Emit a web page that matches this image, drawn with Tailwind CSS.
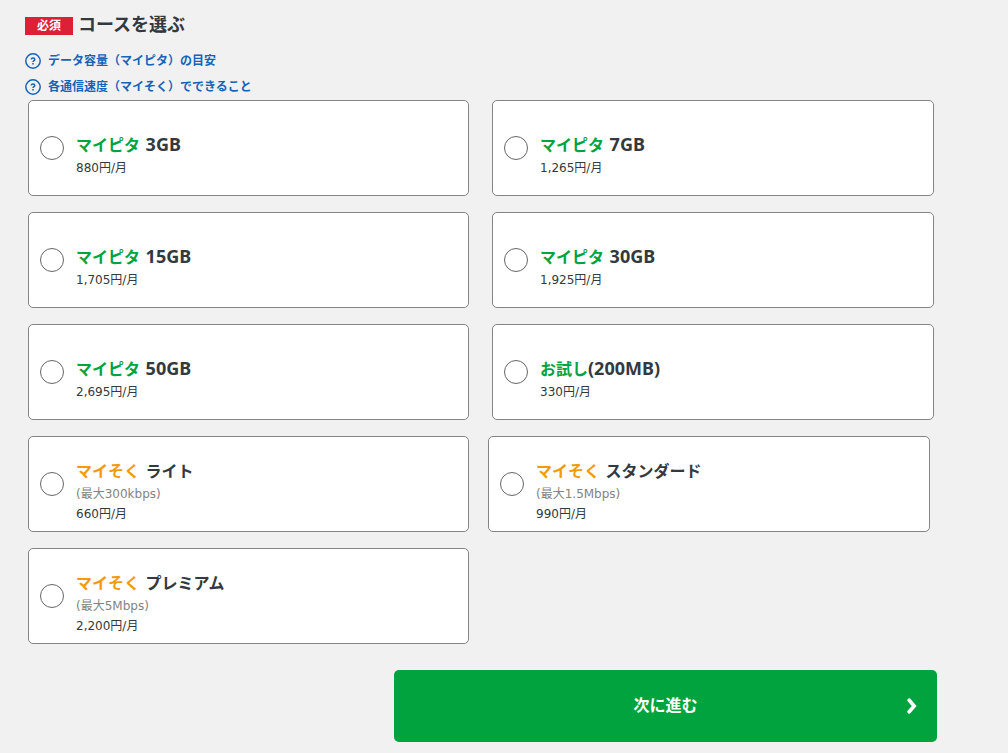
<!DOCTYPE html>
<html lang="ja">
<head>
<meta charset="utf-8">
<meta name="viewport" content="width=device-width, initial-scale=1">
<title>コースを選ぶ</title>
<script src="https://cdn.jsdelivr.net/npm/@tailwindcss/browser@4"></script>
</head>
<body class="min-h-screen bg-[#f1f1f1] font-['DejaVu_Sans','Noto_Sans_CJK_JP',sans-serif] text-[#333940]">
<main class="pt-[13px] pr-[71px] pb-[11px] pl-[25px]">
  <h2 class="flex h-6 items-center gap-[5px] text-lg leading-6 font-bold">
    <span class="mt-[2px] flex h-[18px] w-12 items-center justify-center bg-[#dc2035] text-xs leading-none text-white">必須</span>
    <span>コースを選ぶ</span>
  </h2>
  <ul class="mt-[11px] text-xs font-bold text-[#1464ba]">
    <li class="flex h-[26px] items-center">
      <a href="#capacity" class="flex items-center gap-[7px]">
        <svg class="size-4" viewBox="0 0 16 16" fill="none" stroke="currentColor" aria-hidden="true"><circle cx="8" cy="8" r="7.2" stroke-width="1.5"/><path d="M6.200 6.400C6.300 5.500 7 5 8 5s1.800.5 1.800 1.400c0 1.200-1.800 1.300-1.800 2.700" stroke-width="1.500"/><path d="M8 10v1.600" stroke-width="1.600"/></svg>
        <span>データ容量（マイピタ）の目安</span>
      </a>
    </li>
    <li class="flex h-[26px] items-center">
      <a href="#speed" class="flex items-center gap-[7px]">
        <svg class="size-4" viewBox="0 0 16 16" fill="none" stroke="currentColor" aria-hidden="true"><circle cx="8" cy="8" r="7.2" stroke-width="1.5"/><path d="M6.200 6.400C6.300 5.500 7 5 8 5s1.800.5 1.800 1.400c0 1.200-1.800 1.300-1.800 2.700" stroke-width="1.500"/><path d="M8 10v1.600" stroke-width="1.600"/></svg>
        <span>各通信速度（マイそく）でできること</span>
      </a>
    </li>
  </ul>

  <form>
    <div class="mr-[3px] ml-[3px] grid grid-cols-[441fr_442fr] gap-x-[23px] gap-y-4">
      <label class="flex h-24 items-center gap-3 rounded-[5px] border border-[#858588] bg-white px-[11px]">
        <input type="radio" name="course" class="size-6 shrink-0 appearance-none rounded-full border border-[#66666a] bg-white checked:border-8 checked:border-[#00a33e]">
        <span class="flex flex-col pt-[14px] text-xs leading-5">
          <span class="text-base leading-6 font-bold"><span class="text-[#00a33e]">マイピタ</span> <span class="font-['Noto_Sans'] text-lg leading-6">3GB</span></span>
          <span>880円/月</span>
        </span>
      </label>
      <label class="flex h-24 items-center gap-3 rounded-[5px] border border-[#858588] bg-white px-[11px]">
        <input type="radio" name="course" class="size-6 shrink-0 appearance-none rounded-full border border-[#66666a] bg-white checked:border-8 checked:border-[#00a33e]">
        <span class="flex flex-col pt-[14px] text-xs leading-5">
          <span class="text-base leading-6 font-bold"><span class="text-[#00a33e]">マイピタ</span> <span class="font-['Noto_Sans'] text-lg leading-6">7GB</span></span>
          <span>1,265円/月</span>
        </span>
      </label>
      <label class="flex h-24 items-center gap-3 rounded-[5px] border border-[#858588] bg-white px-[11px]">
        <input type="radio" name="course" class="size-6 shrink-0 appearance-none rounded-full border border-[#66666a] bg-white checked:border-8 checked:border-[#00a33e]">
        <span class="flex flex-col pt-[14px] text-xs leading-5">
          <span class="text-base leading-6 font-bold"><span class="text-[#00a33e]">マイピタ</span> <span class="font-['Noto_Sans'] text-lg leading-6">15GB</span></span>
          <span>1,705円/月</span>
        </span>
      </label>
      <label class="flex h-24 items-center gap-3 rounded-[5px] border border-[#858588] bg-white px-[11px]">
        <input type="radio" name="course" class="size-6 shrink-0 appearance-none rounded-full border border-[#66666a] bg-white checked:border-8 checked:border-[#00a33e]">
        <span class="flex flex-col pt-[14px] text-xs leading-5">
          <span class="text-base leading-6 font-bold"><span class="text-[#00a33e]">マイピタ</span> <span class="font-['Noto_Sans'] text-lg leading-6">30GB</span></span>
          <span>1,925円/月</span>
        </span>
      </label>
      <label class="flex h-24 items-center gap-3 rounded-[5px] border border-[#858588] bg-white px-[11px]">
        <input type="radio" name="course" class="size-6 shrink-0 appearance-none rounded-full border border-[#66666a] bg-white checked:border-8 checked:border-[#00a33e]">
        <span class="flex flex-col pt-[14px] text-xs leading-5">
          <span class="text-base leading-6 font-bold"><span class="text-[#00a33e]">マイピタ</span> <span class="font-['Noto_Sans'] text-lg leading-6">50GB</span></span>
          <span>2,695円/月</span>
        </span>
      </label>
      <label class="flex h-24 items-center gap-3 rounded-[5px] border border-[#858588] bg-white px-[11px]">
        <input type="radio" name="course" class="size-6 shrink-0 appearance-none rounded-full border border-[#66666a] bg-white checked:border-8 checked:border-[#00a33e]">
        <span class="flex flex-col pt-[14px] text-xs leading-5">
          <span class="text-base leading-6 font-bold"><span class="text-[#00a33e]">お試し</span><span class="font-['Noto_Sans'] text-lg leading-6">(200MB)</span></span>
          <span>330円/月</span>
        </span>
      </label>
    </div>

    <div class="mt-4 mr-[7px] ml-[3px] grid grid-cols-[441fr_442fr] gap-x-[19px] gap-y-4">
      <label class="flex h-24 items-center gap-3 rounded-[5px] border border-[#858588] bg-white px-[11px]">
        <input type="radio" name="course" class="size-6 shrink-0 appearance-none rounded-full border border-[#66666a] bg-white checked:border-8 checked:border-[#00a33e]">
        <span class="flex flex-col pt-4 text-xs leading-5">
          <span class="text-base leading-6 font-bold"><span class="text-[#f09a0c]">マイそく</span> ライト</span>
          <span class="text-[#828282]">(最大300kbps)</span>
          <span>660円/月</span>
        </span>
      </label>
      <label class="flex h-24 items-center gap-3 rounded-[5px] border border-[#858588] bg-white px-[11px]">
        <input type="radio" name="course" class="size-6 shrink-0 appearance-none rounded-full border border-[#66666a] bg-white checked:border-8 checked:border-[#00a33e]">
        <span class="flex flex-col pt-4 text-xs leading-5">
          <span class="text-base leading-6 font-bold"><span class="text-[#f09a0c]">マイそく</span> スタンダード</span>
          <span class="text-[#828282]">(最大1.5Mbps)</span>
          <span>990円/月</span>
        </span>
      </label>
      <label class="flex h-24 items-center gap-3 rounded-[5px] border border-[#858588] bg-white px-[11px]">
        <input type="radio" name="course" class="size-6 shrink-0 appearance-none rounded-full border border-[#66666a] bg-white checked:border-8 checked:border-[#00a33e]">
        <span class="flex flex-col pt-4 text-xs leading-5">
          <span class="text-base leading-6 font-bold"><span class="text-[#f09a0c]">マイそく</span> プレミアム</span>
          <span class="text-[#828282]">(最大5Mbps)</span>
          <span>2,200円/月</span>
        </span>
      </label>
    </div>

    <button type="button" class="mt-[26px] ml-auto grid h-[72px] w-[543px] max-w-full grid-cols-[1fr_auto_1fr] items-center rounded-[5px] bg-[#00a33e] px-5 text-base font-bold text-white">
      <span class="col-start-2">次に進む</span>
      <svg class="h-4 w-[10px] justify-self-end" viewBox="0 0 10 16" fill="none" stroke="currentColor" stroke-width="3.6" stroke-linecap="round" aria-hidden="true"><path d="M2.200 2.200L7.200 8l-5 5.800"/></svg>
    </button>
  </form>
</main>
</body>
</html>
